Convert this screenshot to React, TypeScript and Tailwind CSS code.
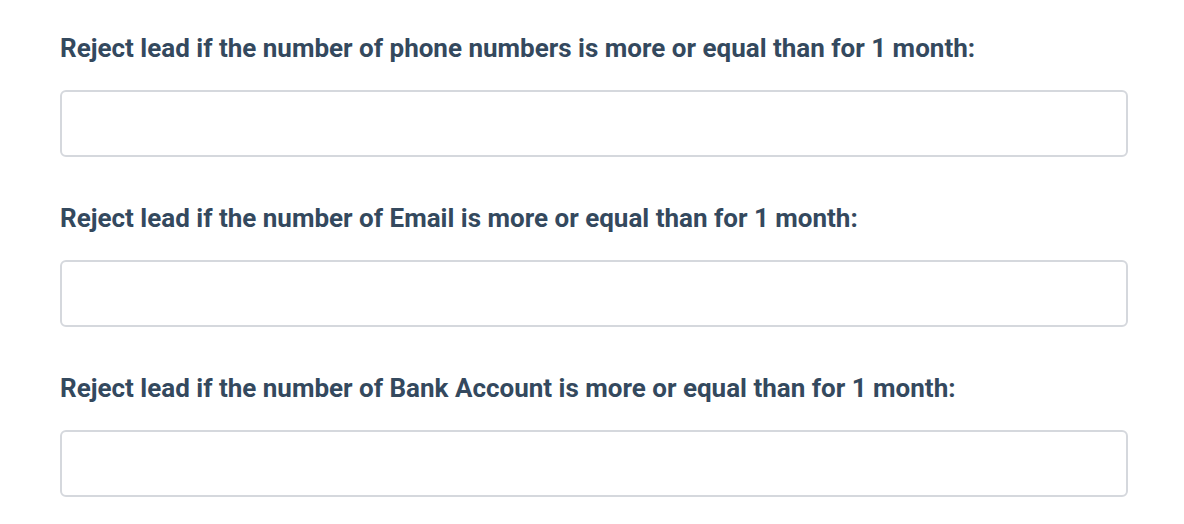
import React from "react";

const labels = [
  "Reject lead if the number of phone numbers is more or equal than for 1 month:",
  "Reject lead if the number of Email is more or equal than for 1 month:",
  "Reject lead if the number of Bank Account is more or equal than for 1 month:",
];

export default function App() {
  return (
    <div className="w-[1184px] h-[524px] bg-white pl-[60px] pr-[56px] pt-[33px]" style={{ fontFamily: "Roboto, 'Liberation Sans', sans-serif" }}>
      <div className="flex flex-col gap-[46px]">
        {labels.map((l) => (
          <div key={l} className="flex flex-col gap-[27px]">
            <label className="text-[26px] leading-[30px] font-bold text-[#34495e]">{l}</label>
            <input type="text" className="h-[67px] w-full rounded-[6px] border-2 border-[#d5d8dd] bg-white outline-none" />
          </div>
        ))}
      </div>
    </div>
  );
}
